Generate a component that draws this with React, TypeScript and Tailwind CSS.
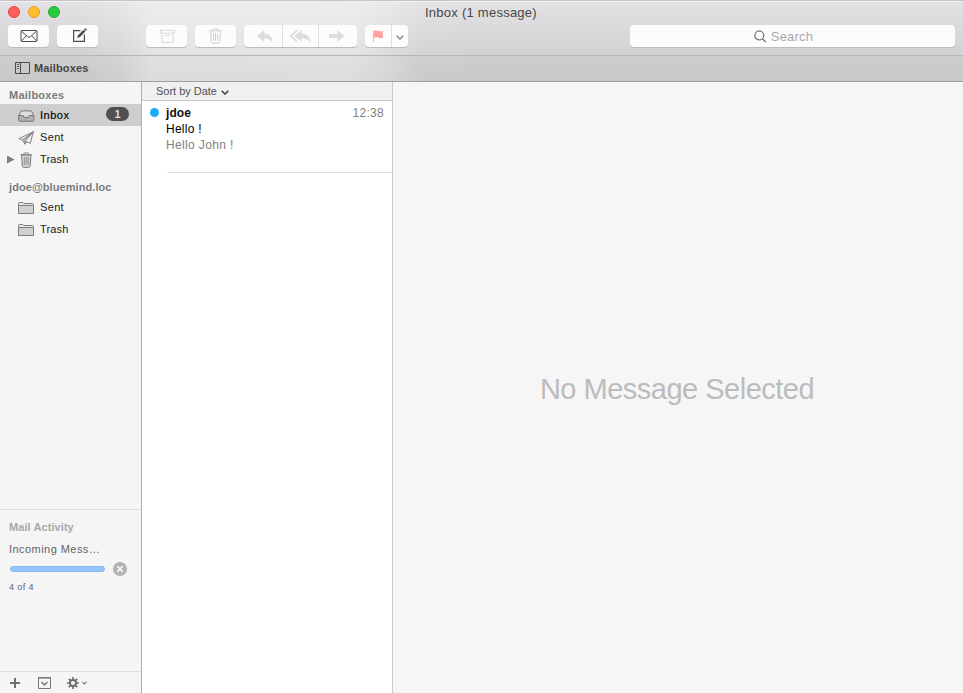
import React from "react";

const font = "font-['Liberation_Sans',Arial,sans-serif]";

function ToolButton({ className = "", children }: { className?: string; children: React.ReactNode }) {
  return (
    <div className={"flex h-[22px] items-center justify-center rounded-[4px] bg-[#fcfcfc] shadow-[0_1px_0_#bcbabd] " + className}>
      {children}
    </div>
  );
}

function Envelope() {
  return (
    <svg width="18" height="12" viewBox="0 0 18 12" fill="none" stroke="#4b4b4b" strokeWidth="1">
      <rect x="1" y="0.5" width="16" height="11" rx="1" />
      <path d="M1.3 1 7.5 6.6Q9 7.8 10.500 6.6L16.700 1M1.300 11 6.400 5.700M16.700 11 11.600 5.700" />
    </svg>
  );
}

function Compose() {
  return (
    <svg width="16" height="16" viewBox="0 0 16 16" fill="none" stroke="#4b4b4b" strokeWidth="1.200">
      <path d="M9.500 3.600H2.600V14.400H13.400V7.500" />
      <path d="M6.200 11 7 8.300 12.600 2.700 14.400 4.500 8.800 10.200Z" fill="#4b4b4b" stroke="none" />
      <path d="M13.100 2.200 14.200 1.100 15.900 2.800 14.800 3.900Z" fill="#4b4b4b" stroke="none" />
    </svg>
  );
}

function Archive() {
  return (
    <svg width="15" height="14" viewBox="0 0 15 14" fill="none" stroke="#d8d8d8" strokeWidth="1.100">
      <path d="M.7 1.200H14.300V4.200H.7ZM2 4.200V13.200H13V4.200M5.200 6.500H9.800" />
    </svg>
  );
}

function TrashTool() {
  return (
    <svg width="13" height="16" viewBox="0 0 13 16" fill="none" stroke="#cfcfcf" strokeWidth="1">
      <path d="M.5 2.800H12.500M4 2.500V1.800Q4 .8 5 .8H8Q9 .8 9 1.800V2.500M1.600 3 2.200 13.600Q2.300 15.200 3.800 15.200H9.200Q10.700 15.200 10.800 13.600L11.400 3M4.500 5.300V12.700M6.500 5.300V12.700M8.500 5.300V12.700" />
    </svg>
  );
}

function Reply() {
  return (
    <svg width="16" height="13" viewBox="0 0 16 13" fill="#dddddd">
      <path d="M0 6 7.200 0V3.600C12 3.600 15 6.500 15.800 12.800C13.500 9.300 11 8.400 7.200 8.500V12Z" />
    </svg>
  );
}

function ReplyAll() {
  return (
    <svg width="21" height="13" viewBox="0 0 21 13" fill="#dddddd">
      <path d="M4 6 11.500 0V3.600C16.500 3.600 19.800 6.500 20.600 12.800C18.200 9.300 15.500 8.400 11.500 8.500V12Z" />
      <path d="M7 .4 .8 6 7 11.600" fill="none" stroke="#dddddd" strokeWidth="1.700" />
    </svg>
  );
}

function Forward() {
  return (
    <svg width="16" height="12" viewBox="0 0 16 12" fill="#dddddd">
      <path d="M0 4H8.500V0L15.500 6 8.500 12V8H0Z" />
    </svg>
  );
}

function Flag() {
  return (
    <svg width="11" height="12" viewBox="0 0 11 12">
      <path d="M0 .5H1V12H0Z" fill="#ffb5b2" />
      <path d="M1 .7C2.500 .2 4 .6 5.500 1.100S8.500 1.600 10.300 1L9.500 4.500 10.300 7.800C8.500 8.400 7 8.200 5.500 7.600S2.500 7.100 1 7.700Z" fill="#ffa29f" />
    </svg>
  );
}

function Chevron({ w, h, color, sw }: { w: number; h: number; color: string; sw: number }) {
  return (
    <svg width={w} height={h} viewBox="0 0 8 5" fill="none" stroke={color} strokeWidth={sw}>
      <path d="M.7 .8 4 4 7.300 .8" />
    </svg>
  );
}

function SidebarPane() {
  return (
    <svg width="15" height="12" viewBox="0 0 15 12" fill="none" stroke="#4b4b4b">
      <path d="M.5 .5H14.500V11.500H.5ZM5.500 .5V11.500" />
      <path d="M2 2.500H4M2 4.500H4M2 6.500H4" strokeWidth=".9" />
    </svg>
  );
}

function Tray() {
  return (
    <svg width="17" height="12" viewBox="0 0 17 12" stroke="#757575" strokeWidth="1" strokeLinejoin="round">
      <path d="M.7 5.500 3.200 .9H13.300L15.800 5.500" fill="#dedede" />
      <path d="M.7 5.500H5Q5.300 8 8.250 8T11.500 5.500H15.800V10.200Q15.800 11.200 14.800 11.200H1.700Q.7 11.200 .7 10.200Z" fill="#b2b2b2" />
    </svg>
  );
}

function Plane() {
  return (
    <svg width="17" height="14" viewBox="0 0 17 14" fill="#f0f0f0" stroke="#7d7d7d" strokeWidth=".95" strokeLinejoin="round">
      <path d="M15.300 .8 .9 7.600 4.500 9.100ZM15.300 .8 6.800 10 12.300 12.300Z" />
      <path d="M4.500 9.100 15.300 .8 6.800 10 6.900 13.200 8.700 10.900M4.500 9.100 6.900 13.200" fill="#cccccc" />
    </svg>
  );
}

function TrashSide() {
  return (
    <svg className="ml-[2px]" width="13" height="16" viewBox="0 0 13 16" stroke="#777777" strokeWidth="1">
      <path d="M1.600 3 2.300 13.800Q2.400 15.300 3.900 15.300H8.600Q10.100 15.300 10.200 13.800L10.900 3Z" fill="#dadada" />
      <path d="M.3 2.700H12.200M4 2.500V1.600Q4 .8 4.800 .8H7.700Q8.500 .8 8.500 1.600V2.500M4.300 5V12.900M6.250 5V12.900M8.200 5V12.900" fill="none" strokeWidth=".8" />
    </svg>
  );
}

function Folder() {
  return (
    <svg className="mt-[1px]" width="17" height="13" viewBox="0 0 17 13" stroke="#7d7d7d">
      <path d="M.5 11.500V1.500Q.5 .5 1.500 .5H4.800L5.800 1.500H14.500Q15.500 1.500 15.500 2.500V11.500Z" fill="#e9e9e9" />
      <path d="M.5 3.500H15.500V11.500H.5Z" fill="#d0d0d0" />
    </svg>
  );
}

function Row({ icon, label, labelClass = "", arrow = false, selected = false, badge }: {
  icon: React.ReactNode; label: string; labelClass?: string; arrow?: boolean; selected?: boolean; badge?: string;
}) {
  return (
    <div className={"flex h-[22px] items-center text-[11px] " + (selected ? "bg-[#cecece] text-black" : "text-[#202020]")}>
      <div className="flex w-[18px] shrink-0 pl-[7px]">
        {arrow && <svg width="8" height="9" viewBox="0 0 8 9"><path d="M0 .5 7.500 4.500 0 8.500Z" fill="#7f7f7f" /></svg>}
      </div>
      <div className="flex w-[22px] shrink-0 pt-[1px]">{icon}</div>
      <div className={"grow " + labelClass}>{label}</div>
      {badge && (
        <div className="mr-3 flex h-[14px] w-[23px] -translate-y-px items-center justify-center rounded-full bg-[#505050] text-[11px] font-bold text-[#dedede]">{badge}</div>
      )}
    </div>
  );
}

export default function App() {
  return (
    <div className={"flex h-[693px] w-[963px] flex-col overflow-hidden bg-[#f6f6f6] " + font}>
      <header className="h-[82px] shrink-0 border-b border-[#a0a0a0] bg-[linear-gradient(to_right,rgba(255,255,255,0)_80px,rgba(255,255,255,0.12)_120px,rgba(255,255,255,0.36)_150px,rgba(255,255,255,0.38)_350px,rgba(255,255,255,0.25)_385px,rgba(255,255,255,0.04)_420px,rgba(255,255,255,0)_480px),linear-gradient(to_bottom,#e4e2e5_0px,#d3d1d4_55px,#cfcecf_56px,#c9c8c9_81px)]">
        <div className="h-[56px] border-t border-b border-t-[#c6c4c7] border-b-[#b6b4b7] shadow-[inset_0_1px_0_#f2f0f3]">
          <div className="flex h-6 items-center">
            <div className="flex w-[425px] gap-2 pb-[2px] pl-2">
              <span className="size-3 rounded-full border border-[#e2463f] bg-[#ff5f58]" />
              <span className="size-3 rounded-full border border-[#e0a02b] bg-[#ffbd2e]" />
              <span className="size-3 rounded-full border border-[#1dac2c] bg-[#28ca40]" />
            </div>
            <div className="text-[13px] leading-4 tracking-[0.25px] text-[#474747]">Inbox (1 message)</div>
          </div>
          <div className="flex pl-2">
            <ToolButton className="w-[41px]"><Envelope /></ToolButton>
            <ToolButton className="ml-2 w-[41px] pb-[2px] pl-[2px]"><Compose /></ToolButton>
            <ToolButton className="ml-12 w-[41px] pl-[2px]"><Archive /></ToolButton>
            <ToolButton className="ml-2 w-[41px]"><TrashTool /></ToolButton>
            <ToolButton className="ml-2 w-[113px]">
              <div className="flex h-full w-[39px] items-center justify-center border-r border-[#dedede] pl-1"><Reply /></div>
              <div className="flex h-full w-[36px] items-center justify-center border-r border-[#dedede]"><ReplyAll /></div>
              <div className="flex h-full w-[38px] items-center justify-center pr-[3px]"><Forward /></div>
            </ToolButton>
            <ToolButton className="ml-2 w-[43px]">
              <div className="flex h-full w-[27px] items-center justify-center border-r border-[#dedede] pb-[1px]"><Flag /></div>
              <div className="flex h-full w-[16px] items-center justify-center pt-[2px]"><Chevron w={8} h={5} color="#8a8a8a" sw={1.5} /></div>
            </ToolButton>
            <ToolButton className="ml-[222px] w-[325px] pr-[18px]">
              <svg width="13" height="13" viewBox="0 0 13 13" fill="none" stroke="#606060" strokeWidth="1.100"><circle cx="5.300" cy="5.500" r="4.500" /><path d="M8.500 8.800 11.800 12.200" /></svg>
              <span className="ml-1 pt-[1px] text-[13px] leading-4 tracking-[0.2px] text-[#a8a8a8]">Search</span>
            </ToolButton>
          </div>
        </div>
        <div className="flex h-[25px] items-center gap-[4px] pl-[15px]">
          <span className="pb-[1px]"><SidebarPane /></span>
          <span className="text-[11px] font-bold tracking-[0.15px] text-[#464646]">Mailboxes</span>
        </div>
      </header>

      <div className="flex grow">
        <aside className="flex w-[142px] shrink-0 flex-col border-r border-[#b0b0b0] bg-[#f5f5f5]">
          <div className="flex h-[22px] items-center pl-[9px] pt-[4px] text-[11px] font-bold tracking-[0.25px] text-[#7b7b7b]">Mailboxes</div>
          <Row icon={<Tray />} label="Inbox" selected badge="1" labelClass="tracking-[0.5px] [-webkit-text-stroke:0.15px]" />
          <Row icon={<Plane />} label="Sent" labelClass="tracking-[0.35px]" />
          <Row icon={<TrashSide />} label="Trash" arrow labelClass="tracking-[0.15px]" />
          <div className="flex h-[27px] items-center pl-[9px] pt-[7px] text-[11px] font-bold tracking-[0.08px] text-[#7b7b7b]">jdoe@bluemind.loc</div>
          <div className="-mt-px">
            <Row icon={<Folder />} label="Sent" labelClass="tracking-[0.35px]" />
            <Row icon={<Folder />} label="Trash" labelClass="tracking-[0.15px]" />
          </div>

          <div className="mt-auto h-[162px] border-t border-[#dcdcdc] pl-[9px]">
            <div className="mt-[10px] text-[11px] font-bold leading-[14px] tracking-[0.08px] text-[#a8a8a8]">Mail Activity</div>
            <div className="mt-[8px] text-[11px] leading-[14px] tracking-[0.45px] text-[#636363]">Incoming Mess…</div>
            <div className="mt-[6px] flex h-[14px] items-center">
              <div className="ml-[1px] h-[6px] w-[95px] rounded-[3px] border border-[#8abaf2] bg-[#95c5ff]" />
              <svg className="ml-2" width="14" height="14" viewBox="0 0 14 14"><circle cx="7" cy="7" r="7" fill="#b2b2b2" /><path d="M4.200 4.200 9.800 9.800M9.800 4.200 4.200 9.800" stroke="#f5f5f5" strokeWidth="1.700" /></svg>
            </div>
            <div className="mt-[5px] text-[9px] leading-[12px] tracking-[0.4px] text-[#53658a]">4 of 4</div>
          </div>
          <div className="flex h-[22px] items-center border-t border-[#dcdcdc] pl-[10px]">
            <svg width="10" height="10" viewBox="0 0 10 10"><path d="M0 5H10M5 0V10" stroke="#6f6f6f" strokeWidth="2" /></svg>
            <svg className="ml-[18px]" width="13" height="12" viewBox="0 0 13 12" fill="none" stroke="#777777"><path d="M.5 .7H12.500V11.500H.5Z" /><path d="M0 .7H13M3.500 5 6.500 8 9.500 5" strokeWidth="1.500" /></svg>
            <svg className="ml-[16px]" width="12" height="12" viewBox="-6 -6 12 12" fill="none" stroke="#6f6f6f"><circle r="3.100" strokeWidth="2" /><path d="M0-6V-3.500M0 3.500V6M-6 0H-3.500M3.500 0H6M-4.200-4.200-2.500-2.500M2.500 2.500 4.200 4.200M-4.200 4.200-2.500 2.500M2.500-2.500 4.200-4.200" strokeWidth="1.700" /></svg>
            <span className="ml-[3px]"><Chevron w={5} h={4} color="#777777" sw={1.800} /></span>
          </div>
        </aside>

        <section className="w-[251px] shrink-0 border-r border-[#cbcbcb] bg-white">
          <div className="flex h-[19px] items-center border-b border-[#c8c8c8] bg-[#f0f0f0] pl-[14px] text-[11px] tracking-[-0.02px] text-[#505050]">
            Sort by Date
            <span className="ml-[4px] mt-[3px]"><Chevron w={8} h={5} color="#505050" sw={1.700} /></span>
          </div>
          <div className="flex pt-[4px]">
            <div className="flex w-6 shrink-0 pl-2 pt-[3px]"><span className="size-[9px] rounded-full bg-[#1badf8]" /></div>
            <div className="grow text-[12px] leading-4">
              <div className="flex justify-between pr-2">
                <span className="font-bold tracking-[0.05px] text-[#111]">jdoe</span>
                <span className="tracking-[0.3px] text-[#7f7f7f]">12:38</span>
              </div>
              <div className="tracking-[0.25px] text-black">Hello !</div>
              <div className="tracking-[0.35px] text-[#808080]">Hello John !</div>
              <div className="ml-px h-5 border-b border-[#e0e0e0]" />
            </div>
          </div>
        </section>

        <main className="flex grow items-center justify-center bg-[#f6f6f6] pt-[5px]">
          <div className="-translate-x-px text-[29px] tracking-[-0.5px] text-[#bcbcbc]">No Message Selected</div>
        </main>
      </div>
    </div>
  );
}
